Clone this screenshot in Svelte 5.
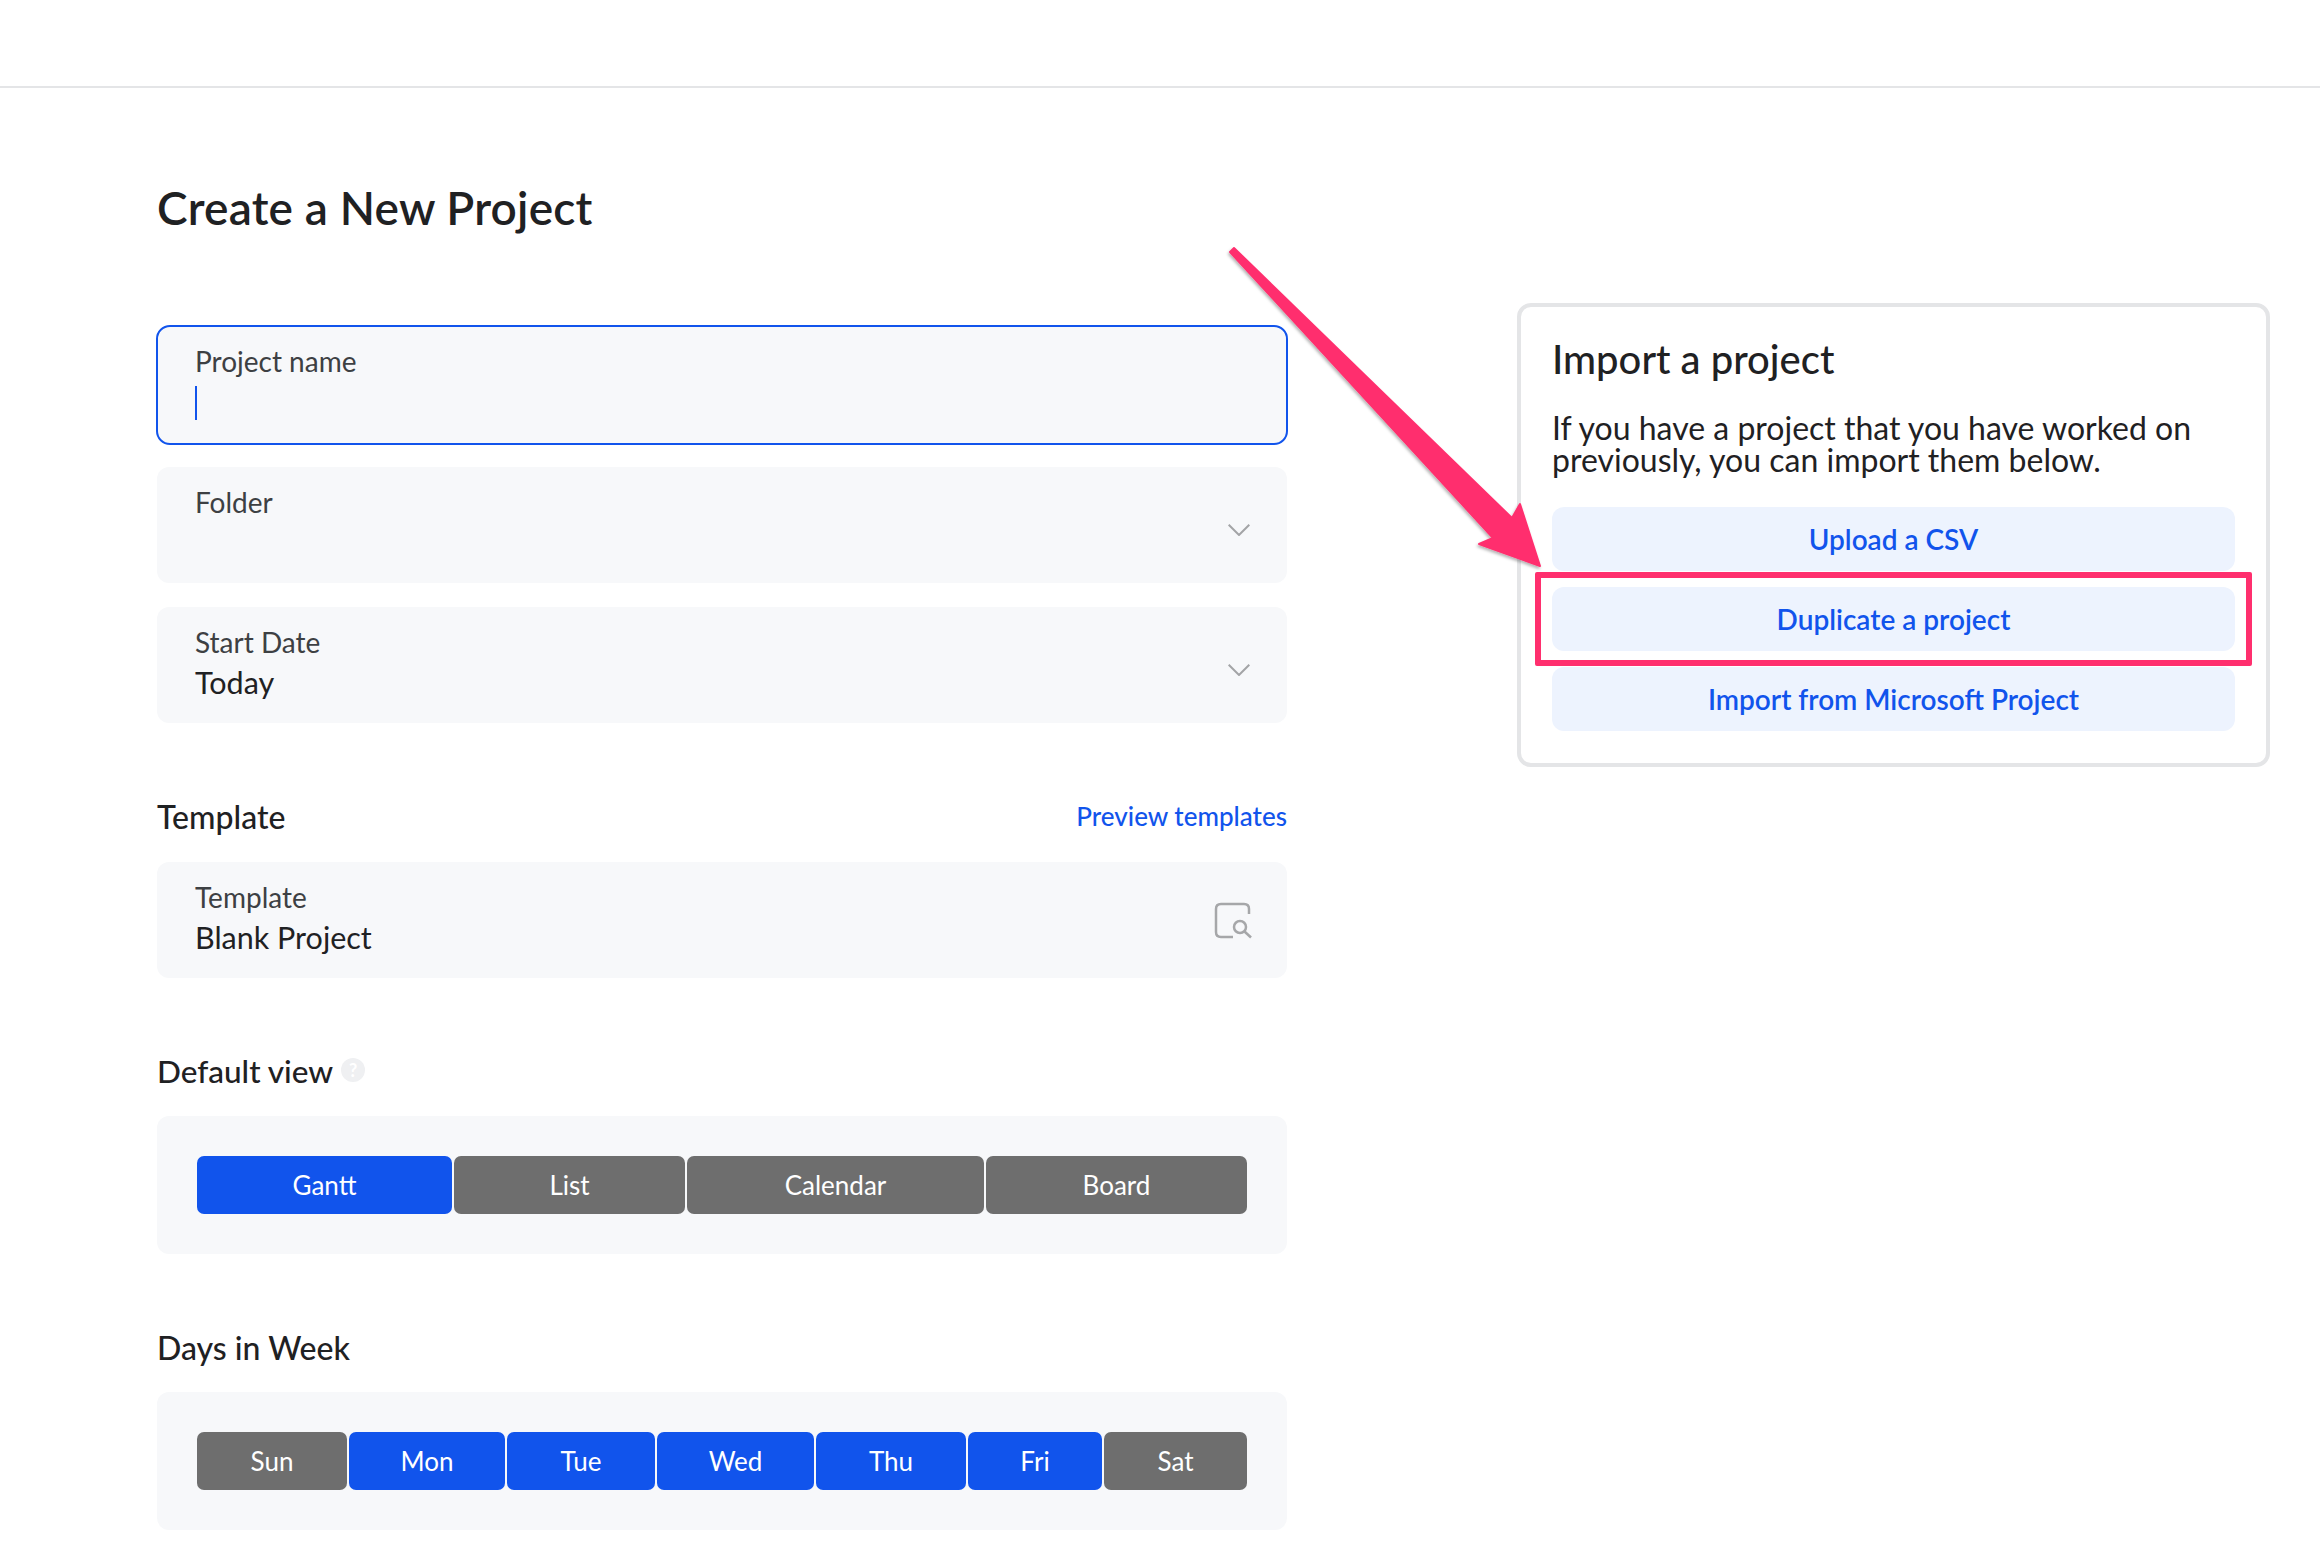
<script>
  const views = [
    { label: 'Gantt', active: true },
    { label: 'List', active: false },
    { label: 'Calendar', active: false },
    { label: 'Board', active: false }
  ];

  const days = [
    { label: 'Sun', active: false },
    { label: 'Mon', active: true },
    { label: 'Tue', active: true },
    { label: 'Wed', active: true },
    { label: 'Thu', active: true },
    { label: 'Fri', active: true },
    { label: 'Sat', active: false }
  ];

  const imports = ['Upload a CSV', 'Duplicate a project', 'Import from Microsoft Project'];
</script>

<main>
  <header class="topbar"></header>

  <div class="page">
    <section class="form">
      <h1>Create a New Project</h1>

      <div class="field focused">
        <span class="label">Project name</span>
        <span class="caret"></span>
      </div>

      <div class="field">
        <span class="label">Folder</span>
        <svg class="chevron" viewBox="0 0 22 12"><path d="M0.7 0.7 L11 11 L21.3 0.7" /></svg>
      </div>

      <div class="field">
        <span class="label">Start Date</span>
        <span class="value">Today</span>
        <svg class="chevron" viewBox="0 0 22 12"><path d="M0.7 0.7 L11 11 L21.3 0.7" /></svg>
      </div>

      <div class="heading template-heading">
        <h2>Template</h2>
        <span class="link">Preview templates</span>
      </div>

      <div class="field">
        <span class="label">Template</span>
        <span class="value">Blank Project</span>
        <svg class="search-doc" viewBox="0 0 38 38">
          <path d="M19 35 H7 Q2 35 2 30 V7 Q2 2 7 2 H30 Q35 2 35 7 V12" />
          <circle cx="26" cy="25" r="6" />
          <path d="M30.5 29.5 L37 35.5" />
        </svg>
      </div>

      <div class="heading view-heading">
        <h2>Default view</h2>
        <span class="help">?</span>
      </div>

      <div class="panel">
        <div class="segments views">
          {#each views as v}
            <div class="segment" class:active={v.active}>{v.label}</div>
          {/each}
        </div>
      </div>

      <div class="heading days-heading">
        <h2>Days in Week</h2>
      </div>

      <div class="panel">
        <div class="segments days">
          {#each days as d}
            <div class="segment" class:active={d.active}>{d.label}</div>
          {/each}
        </div>
      </div>
    </section>

    <aside class="card">
      <h3>Import a project</h3>
      <p>If you have a project that you have worked on previously, you can import them below.</p>
      <div class="actions">
        {#each imports as label}
          <div class="action">{label}</div>
        {/each}
      </div>
    </aside>
  </div>

  <!-- annotation drawn on top of the screenshot -->
  <div class="highlight"></div>
  <svg class="arrow" viewBox="0 0 2320 1546" width="2320" height="1546">
    <defs>
      <filter id="soft" x="-10%" y="-10%" width="120%" height="120%">
        <feDropShadow dx="-1" dy="2" stdDeviation="1.5" flood-color="#000" flood-opacity="0.3" />
      </filter>
    </defs>
    <polygon
      filter="url(#soft)"
      points="1234,248 1512,518 1520,504 1540,566 1479,544 1493,538 1230,252"
    />
  </svg>
</main>

<style>
  :global(body) {
    margin: 0;
    background: #fff;
  }

  main {
    position: relative;
    width: 2320px;
    height: 1546px;
    overflow: hidden;
    font-family: Lato, "Open Sans", sans-serif;
    color: #1f2123;
  }

  .topbar {
    height: 86px;
    border-bottom: 2px solid #e4e5e7;
  }

  .page {
    display: flex;
    align-items: flex-start;
    padding-left: 157px;
  }

  .form {
    width: 1130px;
    display: flex;
    flex-direction: column;
  }

  h1 {
    margin: 93px 0 0;
    height: 54px;
    line-height: 54px;
    font-size: 46px;
    font-weight: 600;
    letter-spacing: 0.2px;
  }

  .field {
    position: relative;
    box-sizing: border-box;
    height: 116px;
    margin-bottom: 24px;
    padding: 19px 38px 0;
    background: #f7f8fa;
    border-radius: 12px;
    display: flex;
    flex-direction: column;
  }

  .field.focused {
    height: 120px;
    margin: 90px -1px 22px;
    padding: 18px 37px 0;
    border: 2px solid #1154ec;
    border-radius: 14px;
  }

  .label {
    font-size: 28px;
    line-height: 32px;
    color: #3d4043;
  }

  .value {
    margin-top: 6px;
    font-size: 30.5px;
    line-height: 36px;
    color: #1f2123;
  }

  .caret {
    width: 2px;
    height: 34px;
    margin-top: 9px;
    background: #1154ec;
  }

  .chevron {
    position: absolute;
    right: 37px;
    top: 57px;
    width: 22px;
    height: 12px;
    fill: none;
    stroke: #a3a4a6;
    stroke-width: 2;
  }

  .search-doc {
    position: absolute;
    right: 35px;
    top: 40px;
    width: 38px;
    height: 38px;
    fill: none;
    stroke: #a6a7a9;
    stroke-width: 2.5;
  }

  .heading {
    display: flex;
    align-items: center;
    height: 36px;
  }

  .template-heading {
    justify-content: space-between;
    margin-top: 51px;
    margin-bottom: 28px;
  }

  .view-heading {
    gap: 8px;
    margin-top: 51px;
    margin-bottom: 27px;
  }

  .days-heading {
    margin-top: 75px;
    margin-bottom: 27px;
  }

  h2 {
    margin: 0;
    font-size: 32px;
    font-weight: 500;
    color: #1f2123;
  }

  .view-heading h2 {
    font-size: 31.5px;
  }

  .link {
    font-size: 26px;
    font-weight: 500;
    color: #1154ec;
  }

  .help {
    width: 24px;
    height: 24px;
    margin-top: -3px;
    border-radius: 50%;
    background: #eff0f2;
    color: #fff;
    font-size: 18px;
    font-weight: 700;
    line-height: 24px;
    text-align: center;
  }

  .panel {
    box-sizing: border-box;
    height: 138px;
    padding: 40px;
    background: #f7f8fa;
    border-radius: 12px;
  }

  .segments {
    display: grid;
    gap: 2px;
    height: 58px;
  }

  .views {
    grid-template-columns: 255fr 231fr 297fr 261fr;
  }

  .days {
    grid-template-columns: 150fr 156fr 148fr 157fr 150fr 134fr 143fr;
  }

  .segment {
    display: flex;
    align-items: center;
    justify-content: center;
    background: #6e6e6e;
    color: #fff;
    border-radius: 7px;
    font-size: 26px;
  }

  .segment.active {
    background: #1154ec;
  }

  .card {
    box-sizing: border-box;
    width: 753px;
    height: 464px;
    margin-top: 215px;
    margin-left: 230px;
    padding: 27px 31px 31px;
    border: 4px solid #e4e5e7;
    border-radius: 14px;
  }

  h3 {
    margin: 0;
    height: 50px;
    line-height: 50px;
    font-size: 40px;
    font-weight: 500;
  }

  p {
    margin: 28px 0 0;
    font-size: 32px;
    line-height: 32px;
    color: #1f2123;
  }

  .actions {
    display: flex;
    flex-direction: column;
    gap: 16px;
    margin-top: 31px;
  }

  .action {
    height: 64px;
    display: flex;
    align-items: center;
    justify-content: center;
    background: #edf3fe;
    border-radius: 12px;
    color: #1154ec;
    font-size: 28px;
    font-weight: 600;
  }

  .highlight {
    position: absolute;
    left: 1535px;
    top: 572px;
    width: 717px;
    height: 94px;
    box-sizing: border-box;
    border: 6px solid #ff2f6e;
    border-radius: 2px;
  }

  .arrow {
    position: absolute;
    left: 0;
    top: 0;
    fill: #ff2f6e;
    stroke: #ff2f6e;
    stroke-width: 2;
    stroke-linejoin: round;
    pointer-events: none;
  }
</style>
